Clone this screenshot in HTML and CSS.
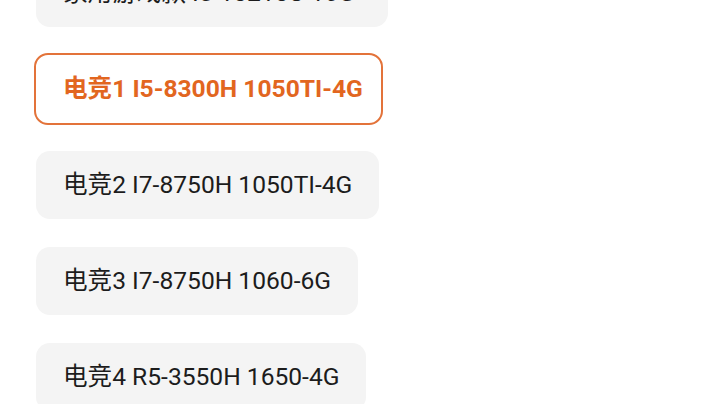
FILE: index.html
```html
<!DOCTYPE html>
<html lang="zh-CN">
<head>
  <meta charset="UTF-8" />
  <meta name="viewport" content="width=device-width, initial-scale=1.0" />
  <title>配置选择</title>
  <link rel="stylesheet" href="styles.css">
</head>
<body>
  <div class="option-list">
    <div class="option">家用游戏款 I5-10210U 16G</div>
    <div class="option selected">电竞1 I5-8300H 1050TI-4G</div>
    <div class="option">电竞2 I7-8750H 1050TI-4G</div>
    <div class="option">电竞3 I7-8750H 1060-6G</div>
    <div class="option">电竞4 R5-3550H 1650-4G</div>
  </div>
</body>
</html>
```

FILE: styles.css
```css
html, body {
  margin: 0;
  padding: 0;
  background: #ffffff;
  font-family: Roboto, "Noto Sans CJK SC", sans-serif;
  overflow: hidden;
}

.option-list {
  display: flex;
  flex-direction: column;
  align-items: flex-start;
  gap: 28px;
  margin-top: -41px;
  padding-left: 36px;
}

.option {
  background: #f4f4f4;
  color: #1c1c1c;
  font-size: 24.6px;
  line-height: 30px;
  padding: 19px 27px;
  border-radius: 14px;
  white-space: nowrap;
}

.option:first-child {
  padding-right: 33px;
}

.option.selected {
  background: #ffffff;
  color: #e2661f;
  font-weight: bold;
  border: 2px solid #e3733a;
  margin: -2px 0 -2px -2px;
  padding-right: 18px;
}
```
